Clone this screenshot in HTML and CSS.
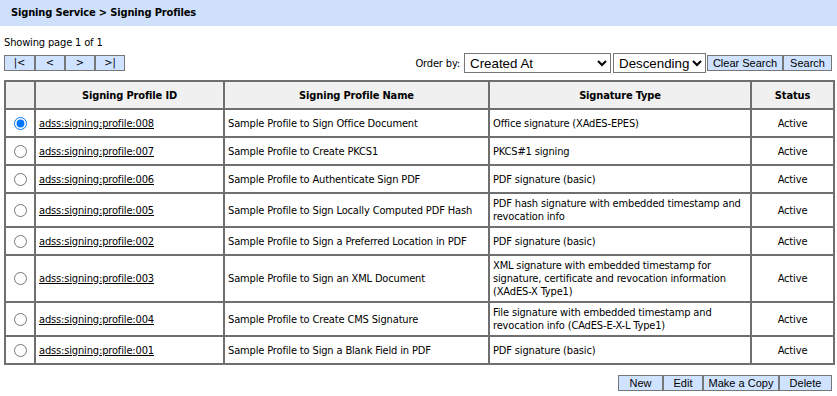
FILE: index.html
```html
<!DOCTYPE html>
<html>
<head>
<meta charset="utf-8">
<link rel="stylesheet" href="styles.css">
</head>
<body>
<div class="titlebar">Signing Service &gt; Signing Profiles</div>
<div class="content">
  <div class="status">Showing page 1 of 1</div>
  <div class="toolbar">
    <div class="pager">
      <button class="btn pbtn">|&lt;</button><button class="btn pbtn">&lt;</button><button class="btn pbtn">&gt;</button><button class="btn pbtn">&gt;|</button>
    </div>
    <div class="order">
      <span class="order-label">Order by:</span>
      <select class="sel sel-field"><option>Created At</option></select>
      <select class="sel sel-dir"><option>Descending</option></select>
      <div class="btngroup"><button class="btn b-clear">Clear Search</button><button class="btn b-search">Search</button></div>
    </div>
  </div>
  <table class="grid">
    <colgroup>
      <col class="c-radio"><col class="c-id"><col class="c-name"><col class="c-type"><col class="c-status">
    </colgroup>
    <thead>
      <tr><th></th><th>Signing Profile ID</th><th>Signing Profile Name</th><th>Signature Type</th><th>Status</th></tr>
    </thead>
    <tbody>
      <tr><td class="rc"><input type="radio" name="p" checked></td><td><a href="#">adss:signing:profile:008</a></td><td>Sample Profile to Sign Office Document</td><td>Office signature (XAdES-EPES)</td><td class="st">Active</td></tr>
      <tr><td class="rc"><input type="radio" name="p"></td><td><a href="#">adss:signing:profile:007</a></td><td>Sample Profile to Create PKCS1</td><td>PKCS#1 signing</td><td class="st">Active</td></tr>
      <tr><td class="rc"><input type="radio" name="p"></td><td><a href="#">adss:signing:profile:006</a></td><td>Sample Profile to Authenticate Sign PDF</td><td>PDF signature (basic)</td><td class="st">Active</td></tr>
      <tr><td class="rc"><input type="radio" name="p"></td><td><a href="#">adss:signing:profile:005</a></td><td>Sample Profile to Sign Locally Computed PDF Hash</td><td>PDF hash signature with embedded timestamp and revocation info</td><td class="st">Active</td></tr>
      <tr><td class="rc"><input type="radio" name="p"></td><td><a href="#">adss:signing:profile:002</a></td><td>Sample Profile to Sign a Preferred Location in PDF</td><td>PDF signature (basic)</td><td class="st">Active</td></tr>
      <tr><td class="rc"><input type="radio" name="p"></td><td><a href="#">adss:signing:profile:003</a></td><td>Sample Profile to Sign an XML Document</td><td>XML signature with embedded timestamp for signature, certificate and revocation information (XAdES-X Type1)</td><td class="st">Active</td></tr>
      <tr><td class="rc"><input type="radio" name="p"></td><td><a href="#">adss:signing:profile:004</a></td><td>Sample Profile to Create CMS Signature</td><td>File signature with embedded timestamp and revocation info (CAdES-E-X-L Type1)</td><td class="st">Active</td></tr>
      <tr><td class="rc"><input type="radio" name="p"></td><td><a href="#">adss:signing:profile:001</a></td><td>Sample Profile to Sign a Blank Field in PDF</td><td>PDF signature (basic)</td><td class="st">Active</td></tr>
    </tbody>
  </table>
  <div class="actions">
    <div class="btngroup"><button class="btn b-new">New</button><button class="btn b-edit">Edit</button><button class="btn b-copy">Make a Copy</button><button class="btn b-delete">Delete</button></div>
  </div>
</div>
</body>
</html>
```

FILE: styles.css
```css
html, body {
  margin: 0;
  padding: 0;
  background: #ffffff;
}
body {
  font-family: "DejaVu Sans Condensed", "Open Sans", sans-serif;
  font-size: 11px;
  letter-spacing: -0.15px;
  color: #000;
}
.titlebar {
  background: #cfe0fb;
  height: 26px;
  line-height: 26px;
  padding-left: 11px;
  font-weight: bold;
  font-size: 11px;
}
.content {
  padding: 0 4px;
}
.status {
  margin-top: 10px;
  height: 14px;
  line-height: 14px;
}
.toolbar {
  display: flex;
  justify-content: space-between;
  align-items: center;
  margin-top: 2px;
  height: 22px;
}
.pager, .btngroup {
  display: flex;
}
.btn {
  font-family: "Liberation Sans", Arial, sans-serif;
  font-size: 11px;
  letter-spacing: 0;
  background: #cfe2ff;
  border: 1px solid #777;
  color: #000;
  height: 16px;
  padding: 0;
  margin: 0;
  line-height: 14px;
  border-radius: 0;
  text-align: center;
}
.pbtn {
  width: 30px;
  font-family: "DejaVu Sans Condensed", "Open Sans", sans-serif;
}
.pbtn:first-child { width: 31px; }
.b-clear { width: 76px; }
.b-search { width: 49px; }
.b-new { width: 45px; }
.b-edit { width: 40px; }
.b-copy { width: 76px; }
.b-delete { width: 53px; }
.order {
  display: flex;
  align-items: center;
  padding-right: 1px;
}
.order-label {
  margin-right: 4px;
}
.sel {
  font-family: "Liberation Sans", Arial, sans-serif;
  font-size: 13.333px;
  letter-spacing: 0;
  height: 20px;
  margin: 0 1px 0 0;
  border: 1px solid #767676;
  border-radius: 0;
  background: #fff;
  color: #000;
  padding: 0 0 0 1px;
}
.sel-field {
  width: 147px;
  margin-right: 2px;
}
.sel-dir {
  width: 93px;
}
.grid {
  margin-top: 6px;
  width: 829px;
  border: 1px solid #6f6f6f;
  border-spacing: 0;
  border-collapse: separate;
  table-layout: fixed;
}
.c-radio { width: 30px; }
.c-id { width: 189px; }
.c-name { width: 265px; }
.c-type { width: 262px; }
.c-status { width: 83px; }
.grid th, .grid td {
  border: 1px solid #6f6f6f;
  padding: 3px 3px;
  height: 20px;
  line-height: 13px;
  vertical-align: middle;
  text-align: left;
}
.grid th {
  background: #f0f0f0;
  font-weight: bold;
  text-align: center;
}
.grid td.rc {
  text-align: center;
  padding: 0;
}
.grid td.rc input {
  margin: 0;
  vertical-align: middle;
}
.grid td.st {
  text-align: center;
}
.grid a {
  color: #000;
  text-decoration: underline;
}
.actions {
  display: flex;
  justify-content: flex-end;
  margin-top: 10px;
  padding-right: 1px;
}
```
